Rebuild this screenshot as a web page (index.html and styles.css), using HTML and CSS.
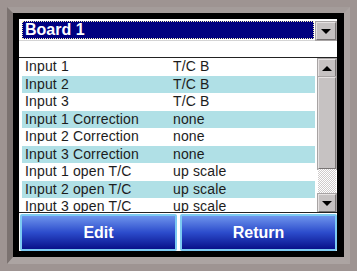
FILE: index.html
```html
<!DOCTYPE html>
<html>
<head>
  <meta charset="UTF-8">
  <title>Board 1</title>
  <link rel="stylesheet" href="styles.css">
</head>
<body>
  <div class="bezel">
    <div class="frame">
      <div class="screen">
        <div class="panel">
          <div class="combo">
            <div class="combo-value">Board 1</div>
            <div class="combo-btn"><span class="tri-down"></span></div>
          </div>

          <div class="list">
            <div class="rows">
              <div class="row"><span class="name">Input 1</span><span>T/C B</span></div>
              <div class="row alt"><span class="name">Input 2</span><span>T/C B</span></div>
              <div class="row"><span class="name">Input 3</span><span>T/C B</span></div>
              <div class="row alt"><span class="name">Input 1 Correction</span><span>none</span></div>
              <div class="row"><span class="name">Input 2 Correction</span><span>none</span></div>
              <div class="row alt"><span class="name">Input 3 Correction</span><span>none</span></div>
              <div class="row"><span class="name">Input 1 open T/C</span><span>up scale</span></div>
              <div class="row alt"><span class="name">Input 2 open T/C</span><span>up scale</span></div>
              <div class="row"><span class="name">Input 3 open T/C</span><span>up scale</span></div>
            </div>
            <div class="scrollbar">
              <div class="sb-btn"><span class="tri-up"></span></div>
              <div class="sb-thumb"></div>
              <div class="sb-track"></div>
              <div class="sb-btn"><span class="tri-down"></span></div>
            </div>
          </div>

          <div class="actions">
            <button class="btn">Edit</button>
            <button class="btn">Return</button>
          </div>
        </div>
      </div>
    </div>
  </div>
</body>
</html>
```

FILE: styles.css
```css
body {
  margin: 0;
  padding: 0;
  background: #9e9492;
  font-family: "Liberation Sans", Arial, sans-serif;
}

.bezel {
  width: 357px;
  height: 271px;
  box-sizing: border-box;
  padding: 7px;
  background: #9e9492;
}

.frame {
  border-style: solid;
  border-width: 6px 6px 7px 6px;
  border-color: #a49c9a #aba3a1 #aca4a2 #7b7270;
}

.screen {
  background: #000;
  padding: 6px 7px 6px 6px;
}

.panel {
  background: #fff;
  height: 232px;
  display: flex;
  flex-direction: column;
}

/* combo box */
.combo {
  display: flex;
  gap: 2px;
  height: 19px;
  padding: 2px 1px 0 3px;
  border-bottom: 1px solid #d4d4d4;
  margin-bottom: 16px;
}

.combo-value {
  width: 292px;
  height: 18px;
  box-sizing: border-box;
  background: #000080;
  border: 1px dotted #f4f0b8;
  color: #fff;
  font-weight: bold;
  font-size: 16px;
  line-height: 16px;
  padding-left: 2px;
}

.combo-btn {
  width: 20px;
  height: 18px;
  margin-top: 1px;
}

.combo-btn,
.sb-btn {
  box-sizing: border-box;
  background: #c6c2c2;
  border: 1px solid;
  border-color: #e6e2e2 #787474 #787474 #e6e2e2;
  box-shadow: 0 0 0 1px #a8a4a4;
  display: flex;
  align-items: center;
  justify-content: center;
}

.tri-down {
  width: 0;
  height: 0;
  border-left: 5px solid transparent;
  border-right: 5px solid transparent;
  border-top: 5px solid #000;
}

.tri-up {
  width: 0;
  height: 0;
  border-left: 5px solid transparent;
  border-right: 5px solid transparent;
  border-bottom: 5px solid #000;
}

/* list */
.list {
  display: flex;
  height: 154px;
  border-top: 1px solid #222;
  border-bottom: 1px solid #222;
  overflow: hidden;
}

.rows {
  width: 293px;
  padding-left: 3px;
  overflow: hidden;
}

.row {
  display: flex;
  height: 17.5px;
  line-height: 17.5px;
  font-size: 14px;
  letter-spacing: 0.15px;
  color: #1c1c1c;
  padding-left: 3px;
  white-space: nowrap;
}

.row.alt {
  background: #b0e0e6;
}

.row .name {
  width: 148px;
}

.scrollbar {
  width: 18px;
  margin-left: 3px;
  margin-top: 1px;
  display: flex;
  flex-direction: column;
}

.sb-btn {
  height: 18px;
  flex: none;
}

.sb-thumb {
  height: 92px;
  box-sizing: border-box;
  background: #c6c2c2;
  border: 1px solid;
  border-color: #e6e2e2 #787474 #787474 #e6e2e2;
  box-shadow: 0 0 0 1px #a8a4a4;
}

.sb-track {
  flex: 1;
  background: repeating-conic-gradient(#ffffff 0 25%, #cfcbcb 0 50%) 0 0 / 2px 2px;
}

/* buttons */
.actions {
  display: flex;
  gap: 3px;
  padding: 1px 0 0 1px;
}

.btn {
  width: 157px;
  height: 37px;
  border: 2px solid #7ccaf2;
  border-radius: 2px;
  background: linear-gradient(#6e94ec, #2c4ccc 50%, #08108a);
  color: #fff;
  font-family: "Liberation Sans", Arial, sans-serif;
  font-weight: bold;
  font-size: 16px;
  cursor: pointer;
  padding: 0;
}
```
